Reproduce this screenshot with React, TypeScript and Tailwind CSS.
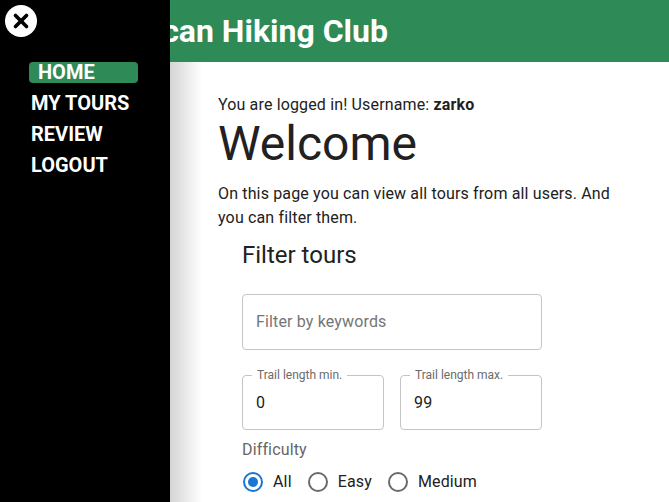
import { X } from "lucide-react";

const NAV = ["Home", "My Tours", "Review", "Logout"];

function Radio({ label, checked }: { label: string; checked?: boolean }) {
  return (
    <label className="mr-[16px] flex items-center gap-[10px]">
      <span
        className={
          "flex h-[20px] w-[20px] items-center justify-center rounded-full border-2 " +
          (checked ? "border-[#1976d2]" : "border-[#6b6b6b]")
        }
      >
        {checked && <span className="h-[10px] w-[10px] rounded-full bg-[#1976d2]" />}
      </span>
      <span className="text-[16px] tracking-[0.15px] text-[#212121]">{label}</span>
    </label>
  );
}

function OutlinedNumber({ label, value }: { label: string; value: string }) {
  return (
    <div className="relative h-[55px] w-[142px] rounded-[4px] border border-[#c4c4c4]">
      <span className="absolute -top-[8px] left-[9px] bg-white px-[5px] text-[12px] leading-[14px] text-[#6b6b6b]">
        {label}
      </span>
      <div className="px-[13px] pt-[15px] text-[16px] tracking-[0.15px] text-[#212121]">{value}</div>
    </div>
  );
}

export default function App() {
  return (
    <div
      className="relative h-[502px] w-[669px] overflow-hidden bg-white"
      style={{ fontFamily: "Roboto, 'Liberation Sans', sans-serif" }}
    >
      <header className="flex h-[62px] items-center bg-[#2e8b57] pl-[76px]">
        <h1 className="text-[32px] font-bold leading-[40px] text-white">American Hiking Club</h1>
      </header>

      <main className="pl-[218px] pt-[33px]">
        <p className="text-[16px] leading-[20px] tracking-[0.15px] text-[#212121]">
          You are logged in! Username: <b>zarko</b>
        </p>
        <h2 className="mt-[1px] text-[48px] font-normal leading-[56px] text-[#212121]">Welcome</h2>
        <p className="mt-[10px] w-[410px] text-[16px] leading-[24px] tracking-[0.15px] text-[#212121]">
          On this page you can view all tours from all users. And you can filter them.
        </p>

        <section className="pl-[24px] pt-[9px]">
          <h3 className="text-[24px] leading-[32px] text-[#212121]">Filter tours</h3>
          <div className="mt-[23px] flex h-[56px] w-[300px] items-center rounded-[4px] border border-[#c4c4c4] px-[13px] text-[16px] tracking-[0.15px] text-[#757575]">
            Filter by keywords
          </div>
          <div className="mt-[25px] flex gap-[16px]">
            <OutlinedNumber label="Trail length min." value="0" />
            <OutlinedNumber label="Trail length max." value="99" />
          </div>
          <div className="mt-[11px] text-[16px] leading-[18px] tracking-[0.15px] text-[#666]">Difficulty</div>
          <div className="mt-[11px] flex items-center pl-[1px]">
            <Radio label="All" checked />
            <Radio label="Easy" />
            <Radio label="Medium" />
          </div>
        </section>
      </main>

      {/* drawer shadow on the page */}
      <div className="absolute left-[170px] top-[62px] h-[440px] w-[32px] bg-gradient-to-r from-[#d4d4d4] to-transparent" />

      <aside className="absolute left-0 top-0 h-full w-[170px] bg-black">
        <button className="absolute left-[5px] top-[5px] flex h-[32px] w-[32px] items-center justify-center rounded-full bg-white">
          <X size={22} strokeWidth={4} color="#000" />
        </button>
        <nav className="flex flex-col gap-[10px] pl-[29px] pt-[62px]">
          {NAV.map((n, i) => (
            <a
              key={n}
              className={
                "block h-[21px] w-[109px] rounded-[4px] text-[20px] font-bold uppercase leading-[21px] text-white " +
                (i === 0 ? "bg-[#2e8b57] pl-[9px]" : "pl-[2px]")
              }
            >
              {n}
            </a>
          ))}
        </nav>
      </aside>
    </div>
  );
}
